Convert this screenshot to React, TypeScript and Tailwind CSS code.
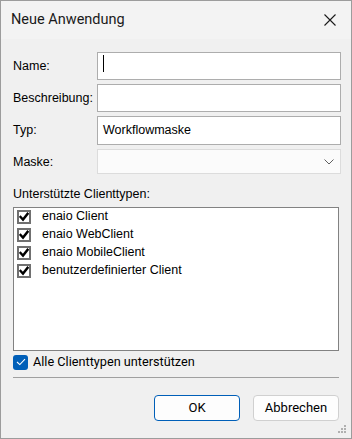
import React from "react";

const labelFont = { fontFamily: '"Liberation Sans", Arial, sans-serif' };
const uiFont = { fontFamily: 'Roboto, "Noto Sans", sans-serif' };

function ClassicCheck({ label }: { label: string }) {
  return (
    <div className="flex h-[18px] items-center pl-[3px]">
      <div className="flex h-[14px] w-[14px] items-center justify-center border-2 border-[#707070] bg-white">
        <svg width="10" height="10" viewBox="0 0 10 10">
          <path d="M1.6 5 L4 7.6 L8.6 1.8" fill="none" stroke="#000" strokeWidth="2.4" strokeLinecap="square" />
        </svg>
      </div>
      <span className="ml-[11px] text-[12.5px] leading-none text-black">{label}</span>
    </div>
  );
}

export default function App() {
  return (
    <div
      className="flex h-[439px] w-[352px] flex-col border border-[#9c9c9c] bg-[#f0f0f0]"
      style={labelFont}
    >
      <div className="flex h-[38px] shrink-0 items-center justify-between bg-[#f3f3f3] pl-[10px] pr-[15px]">
        <span className="text-[14.5px] text-[#1a1a1a]" style={uiFont}>
          Neue Anwendung
        </span>
        <svg width="12" height="12" viewBox="0 0 12 12">
          <path d="M0.5 0.5 L11.5 11.5 M11.5 0.5 L0.5 11.5" stroke="#1a1a1a" strokeWidth="1.1" fill="none" />
        </svg>
      </div>

      <div className="flex flex-1 flex-col px-[12px] pt-[13px]">
        <div className="-mr-[2px] grid grid-cols-[84px_1fr] gap-y-[4px] text-[12.5px] text-black">
          <div className="flex items-center">Name:</div>
          <div className="relative h-[28px] border border-[#adadad] bg-white">
            <div className="absolute left-[5px] top-[2px] h-[17px] w-px bg-black" />
          </div>
          <div className="flex items-center">Beschreibung:</div>
          <div className="h-[28px] border border-[#adadad] bg-white" />
          <div className="flex items-center">Typ:</div>
          <div className="h-[29px] border border-[#adadad] bg-white px-[5px] pt-[4px]">Workflowmaske</div>
          <div className="flex items-center pt-[2px]">Maske:</div>
          <div className="flex h-[25px] items-center justify-end border border-[#dcdcdc] bg-[#fbfbfb] pr-[6px]">
            <svg width="10" height="6" viewBox="0 0 10 6">
              <path d="M0.5 0.5 L5 5 L9.5 0.5" fill="none" stroke="#606060" strokeWidth="1" />
            </svg>
          </div>
        </div>

        <div className="mt-[14px] text-[12.5px] leading-none text-black">Unterstützte Clienttypen:</div>

        <div className="mt-[6px] h-[144px] border border-[#828282] bg-white">
          <ClassicCheck label="enaio Client" />
          <ClassicCheck label="enaio WebClient" />
          <ClassicCheck label="enaio MobileClient" />
          <ClassicCheck label="benutzerdefinierter Client" />
        </div>

        <div className="mt-[4px] flex items-center" style={uiFont}>
          <div className="flex h-[15px] w-[15px] items-center justify-center rounded-[3px] bg-[#005fb8]">
            <svg width="10" height="8" viewBox="0 0 10 8">
              <path d="M1 4 L3.8 6.6 L9 1.2" fill="none" stroke="#fff" strokeWidth="1.1" />
            </svg>
          </div>
          <span className="ml-[5px] text-[12.7px] leading-none text-black">Alle Clienttypen unterstützen</span>
        </div>

        <div className="mt-[7px] h-px bg-[#a0a0a0]" />

        <div className="mt-[17px] flex justify-end gap-[13px] text-[13px] text-black" style={uiFont}>
          <button className="flex h-[26px] w-[86px] items-center justify-center rounded-[4px] border border-[#005fb8] bg-[#fdfdfd]">
            OK
          </button>
          <button className="flex h-[26px] w-[86px] items-center justify-center rounded-[4px] border border-[#d0d0d0] bg-[#fdfdfd]">
            Abbrechen
          </button>
        </div>

        <div className="mt-auto -mr-[12px] flex justify-end pb-[4px] pr-[4px]">
          <svg width="9" height="9" viewBox="0 0 9 9">
            <rect x="6" y="0" width="2" height="2" fill="#b0b0b0" />
            <rect x="3" y="3" width="2" height="2" fill="#b0b0b0" />
            <rect x="6" y="3" width="2" height="2" fill="#b0b0b0" />
            <rect x="0" y="6" width="2" height="2" fill="#b0b0b0" />
            <rect x="3" y="6" width="2" height="2" fill="#b0b0b0" />
            <rect x="6" y="6" width="2" height="2" fill="#b0b0b0" />
          </svg>
        </div>
      </div>
    </div>
  );
}
